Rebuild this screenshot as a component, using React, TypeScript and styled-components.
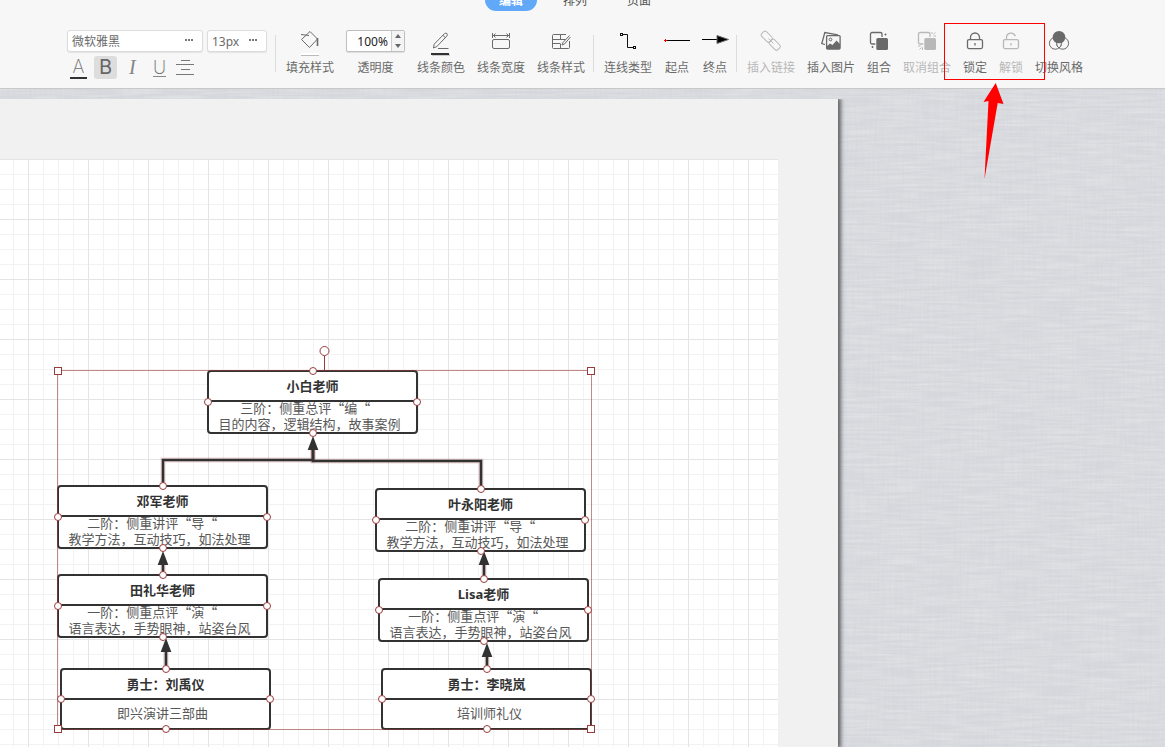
import React from "react";
import styled, { createGlobalStyle, css } from "styled-components";

const ui = '"Noto Sans", "Noto Sans CJK SC", sans-serif';
const cjk = '"Noto Sans CJK SC", "Noto Sans", sans-serif';
const ink = "#323232";
const mark = "#9a3b3b";

const GlobalStyle = createGlobalStyle`
  * { box-sizing: border-box; }
  html, body, #root { height: 100%; }
  body { margin: 0; overflow: hidden; font-family: ${ui}; font-size: 12px; color: #6a6a6a; }
  button, input, select { font: inherit; color: inherit; margin: 0; padding: 0; border: 0; background: none; }
`;

const Shell = styled.div`
  position: relative;
  display: flex;
  flex-direction: column;
  height: 100vh;
  overflow: hidden;
`;

const Header = styled.header`
  flex: none;
  background: #f7f7f7;
  border-bottom: 1px solid #c8c8c8;
  padding-right: 15px;
`;

const Tabs = styled.nav`
  display: flex;
  justify-content: center;
  align-items: flex-end;
  gap: 12px;
  height: 11px;
  overflow: hidden;
`;

const Tab = styled.button<{ $active?: boolean }>`
  flex: none;
  height: 22px;
  padding: 0 14px;
  line-height: 24px;
  border-radius: 11px;
  color: #555;
  ${(p) => p.$active && css`background: #62a8f8; color: #fff; font-weight: 700;`}
`;

const Toolbar = styled.div`
  display: flex;
  justify-content: center;
  padding: 19px 0 9px;
`;

const Group = styled.div`
  display: flex;
  flex: none;
  align-items: flex-start;
  gap: 12px;
`;

const Separator = styled.i`
  flex: none;
  width: 1px;
  height: 37px;
  margin: 5px 10px 0 8px;
  background: #dcdcdc;
`;

const FontPanel = styled.div`
  display: flex;
  flex-direction: column;
  gap: 4px;
`;

const FontRow = styled.div`
  display: flex;
  gap: 4px;
`;

const SelectBox = styled.label<{ $width: number }>`
  display: flex;
  align-items: center;
  width: ${(p) => p.$width}px;
  height: 22px;
  padding: 0 8px 0 4px;
  background: #fff;
  border: 1px solid #dcdcdc;
  border-radius: 3px;
  box-shadow: 0 1px 1px rgba(0, 0, 0, 0.08);
  svg { flex: none; }
`;

const Select = styled.select`
  flex: 1;
  min-width: 0;
  height: 20px;
  appearance: none;
  outline: none;
`;

const FormatButton = styled.button<{ $active?: boolean }>`
  display: flex;
  align-items: center;
  justify-content: center;
  width: 23px;
  height: 23px;
  border-radius: 3px;
  background: ${(p) => (p.$active ? "#dddddd" : "transparent")};
`;

const Glyph = styled.span<{ $kind: "color" | "bold" | "italic" | "underline" }>`
  display: block;
  height: 21px;
  font: 200 18px/20px Inter, sans-serif;
  color: #707070;
  ${(p) => p.$kind === "color" && css`width: 17px; height: 22px; border-bottom: 2px solid ${ink};`}
  ${(p) => p.$kind === "bold" && css`font-size: 20px; font-weight: 400; color: #666;`}
  ${(p) => p.$kind === "italic" && css`font: italic 400 20px/20px "Liberation Serif", serif; color: #858585;`}
  ${(p) => p.$kind === "underline" && css`height: 19px; line-height: 19px; border-bottom: 1px solid #888;`}
`;

const ToolButton = styled.button`
  display: flex;
  flex: none;
  flex-direction: column;
  align-items: center;
  gap: 7px;
  line-height: 18px;
  white-space: nowrap;
  &:disabled { color: #b8b8b8; }
`;

const Opacity = styled.div`
  display: flex;
  flex-direction: column;
  align-items: center;
  gap: 7px;
  line-height: 18px;
`;

const Stepper = styled.div`
  display: flex;
  width: 59px;
  height: 22px;
  background: #fff;
  border: 1px solid #bfbfbf;
  border-radius: 2px;
  box-shadow: 0 1px 1px rgba(0, 0, 0, 0.1);
`;

const StepperInput = styled.input`
  flex: 1;
  min-width: 0;
  height: 20px;
  padding-right: 3px;
  text-align: right;
  color: #222;
  outline: none;
`;

const StepperButtons = styled.div`
  display: flex;
  flex-direction: column;
  width: 13px;
  background: #f4f4f4;
  border-left: 1px solid #ccc;
`;

const StepButton = styled.button`
  display: flex;
  flex: 1;
  align-items: center;
  justify-content: center;
`;

const IconSvg = styled.svg`
  display: block;
  width: 26px;
  height: 22px;
  overflow: visible;
`;

const Workspace = styled.main`
  position: relative;
  flex: 1;
  min-height: 0;
  padding: 10px 327px 0 0;
  background: #d6d8dd;
  overflow: hidden;
`;

const Linen = styled.svg`
  position: absolute;
  inset: 0;
  width: 100%;
  height: 100%;
`;

const Paper = styled.div`
  position: relative;
  height: 100%;
  padding: 60px 60px 0 0;
  background: #f1f1f1;
  box-shadow: 2px 0 4px 1px rgba(0, 0, 0, 0.55);
  clip-path: inset(0 -12px 0 0);
`;

const Sheet = styled.div`
  position: relative;
  height: 100%;
  background-color: #fff;
  background-image:
    linear-gradient(to right, #e4e4e4 1px, transparent 1px),
    linear-gradient(to bottom, #e4e4e4 1px, transparent 1px),
    linear-gradient(to right, #f2f2f2 1px, transparent 1px),
    linear-gradient(to bottom, #f2f2f2 1px, transparent 1px);
  background-size: 60px 60px, 60px 60px, 15px 15px, 15px 15px;
  background-position: 28px 0, 0 0, 13px 0, 0 0;
`;

const Overlay = styled.svg`
  position: absolute;
  inset: 0;
  width: 100%;
  height: 100%;
  overflow: visible;
  pointer-events: none;
`;

const Node = styled.article<{ $x: number; $y: number; $h: number }>`
  position: absolute;
  left: ${(p) => p.$x}px;
  top: ${(p) => p.$y}px;
  display: flex;
  flex-direction: column;
  width: 211px;
  height: ${(p) => p.$h}px;
  background: #fff;
  border: 2px solid ${ink};
  border-radius: 4px;
  font-size: 13px;
  line-height: 16px;
`;

const NodeTitle = styled.h3`
  flex: none;
  height: 30px;
  margin: 0;
  border-bottom: 2px solid ${ink};
  font-size: 13px;
  line-height: 28px;
  text-align: center;
  color: ${ink};
`;

const NodeBody = styled.div`
  display: flex;
  flex: 1;
  min-height: 0;
  flex-direction: column;
  justify-content: center;
  padding-bottom: 2px;
  font-family: ${cjk};
  text-align: center;
  white-space: pre;
  color: #585858;
`;

const RedFrame = styled.div`
  position: absolute;
  left: 944px;
  top: 23px;
  width: 101px;
  height: 57px;
  border: 1px solid #f00;
  pointer-events: none;
`;

const RedArrow = styled.svg`
  position: absolute;
  left: 980px;
  top: 82px;
  width: 26px;
  height: 98px;
  pointer-events: none;
`;

function Icon({ children }: { children: React.ReactNode }) {
  return (
    <IconSvg viewBox="0 0 26 22" fill="none" stroke="currentColor" strokeWidth="1" aria-hidden="true">
      {children}
    </IconSvg>
  );
}

function Dots() {
  return (
    <svg width="9" height="4" fill="#777" aria-hidden="true">
      <rect x="0" width="2" height="2" />
      <rect x="3" width="2" height="2" />
      <rect x="6" width="2" height="2" />
    </svg>
  );
}

const icons = {
  fill: (
    <>
      <path d="M13 1.5 20.5 9 12.5 17.5 4.5 9.5Z M4 4.5 12 5.5" />
      <path d="M20.5 8v8" strokeWidth="1.6" />
      <rect x="4" y="24" width="18" height="2" fill="#bbb" stroke="none" />
      <rect x="4" y="23" width="18" height="2" fill="#fff" stroke="none" />
    </>
  ),
  lineColor: (
    <>
      <path d="M5.5 18 6.2 14.2 16.5 3.6Q17.8 2.6 19 3.6 19.8 4.8 18.8 6.1L8.8 16.6Z M15 5.4l2.3 2.2" />
      <path d="M10 18.5h10.5" />
      <rect x="4" y="24" width="18" height="2" fill="#ccc" stroke="none" />
      <rect x="3" y="23" width="18" height="2" fill={ink} stroke="none" />
    </>
  ),
  lineWidth: (
    <>
      <path d="M4.5 3v5M21.5 3v5M5 5.5h16M7.5 3.5l-2 2 2 2M18.5 3.500l2 2-2 2" />
      <rect x="4.5" y="9.5" width="17" height="9" rx="1.5" />
    </>
  ),
  lineStyle: (
    <>
      <path d="M18 4.5H5.5a1 1 0 0 0-1 1v12a1 1 0 0 0 1 1h15a1 1 0 0 0 1-1V11M4.5 9.5h13M4.5 13.5h8M12.5 4.5v5" />
      <path d="M21.5 5.5 15 12.5l-1 2.500 2.500-1 6-7" />
      <path d="M12.500 14v4" />
    </>
  ),
  connector: (
    <g stroke="#111">
      <rect x="5.5" y="3.5" width="2" height="2" />
      <rect x="18.5" y="16.5" width="2" height="2" />
      <path d="M8 4.5h4.5v13H18" />
    </g>
  ),
  start: (
    <>
      <path d="M2 10.500h24" stroke="#000" />
      <path d="M0 10.500h3M1.500 9v3" stroke="#f00" />
    </>
  ),
  end: (
    <>
      <path d="M0 9.500h16" stroke="#000" />
      <path d="M15 5.500 26.500 9.500 15 13.500Z" fill="#000" />
    </>
  ),
  link: (
    <>
      <rect x="3" y="3.4" width="11.5" height="6.6" rx="2" transform="rotate(45 8.75 6.7)" />
      <rect x="11" y="11.4" width="11.5" height="6.6" rx="2" transform="rotate(45 16.75 14.7)" />
      <path d="M10.5 8.500l5 5" />
    </>
  ),
  image: (
    <>
      <path d="M7 14.5 3.8 13.5 6.8 2.6 20 4.800" strokeWidth="1.3" />
      <rect x="8.6" y="5.6" width="13.5" height="13.5" rx="1" strokeWidth="1.3" />
      <circle cx="12.5" cy="9.5" r="1.4" />
      <path d="M8.500 19v-2.500l3.500-3 2.500 1.500 4-4.500 3.500 3.500v5Z" fill="currentColor" stroke="none" />
    </>
  ),
  group: (
    <>
      <rect x="4.5" y="2.5" width="11.5" height="11.5" rx="1.5" strokeWidth="1.3" />
      <rect x="9.300" y="7" width="13.200" height="13.500" rx="2" fill="#f7f7f7" stroke="none" />
      <rect x="10.300" y="8" width="11.700" height="12" rx="1.500" fill="currentColor" stroke="none" />
      <path d="M18.500 4.500h2M19.500 3.500v2M5.500 17h2M6.500 16v2" />
    </>
  ),
  ungroup: (
    <>
      <rect x="4.5" y="2.5" width="11.5" height="11.5" rx="1.5" strokeWidth="1.3" />
      <rect x="9.300" y="7" width="13.200" height="13.500" rx="2" fill="#f7f7f7" stroke="none" />
      <rect x="10.300" y="8" width="11.700" height="12" rx="1.500" fill="currentColor" stroke="none" />
      <path d="M18 2v2M19.500 4.500 21.500 2.500M19.500 6h2.500M8.500 17.500v2.500M7.500 17.500l-2 2M4 16h2.500" />
    </>
  ),
  lock: (
    <>
      <rect x="5.5" y="9.6" width="15" height="9" rx="1.5" strokeWidth="1.3" />
      <path d="M8.5 9.5V7.5a4.5 4.5 0 0 1 9 0v2" strokeWidth="1.3" />
      <path d="M13 13v2.5" strokeWidth="1.3" />
    </>
  ),
  unlock: (
    <>
      <rect x="5.5" y="9.6" width="15" height="9" rx="1.5" strokeWidth="1.3" />
      <path d="M8.5 9.5V7.5a4.5 4.5 0 0 1 8.8-1.2" strokeWidth="1.3" />
      <path d="M13 13v2.5" strokeWidth="1.3" />
    </>
  ),
  theme: (
    <>
      <circle cx="9.3" cy="13.3" r="5.9" />
      <circle cx="16.7" cy="13.3" r="5.9" />
      <circle cx="13" cy="7.3" r="6.3" fill="currentColor" stroke="none" />
      <path d="M10.5 13.5h5L13 18Z" fill="#f7f7f7" stroke="none" />
      <path d="M10.5 13.5q.3 3 2.5 4.5 2.200-1.500 2.500-4.500" />
    </>
  ),
};

function Tool({ icon, label, disabled }: { icon: keyof typeof icons; label: string; disabled?: boolean }) {
  return (
    <ToolButton type="button" disabled={disabled}>
      <Icon>{icons[icon]}</Icon>
      <span>{label}</span>
    </ToolButton>
  );
}

/* Short labels are narrower than their icon, so the icon may overhang. */
const Narrow = styled.div`
  display: flex;
  flex: none;
  justify-content: center;
  width: 24px;
`;

type NodeData = { x: number; y: number; h: number; title: string; lines: string[] };

const nodes: NodeData[] = [
  { x: 207, y: 211, h: 64, title: "小白老师", lines: ["三阶：侧重总评“编“     ", "目的内容，逻辑结构，故事案例  "] },
  { x: 57, y: 326, h: 64, title: "邓军老师", lines: ["二阶：侧重讲评“导“       ", "教学方法，互动技巧，如法处理  "] },
  { x: 375, y: 329, h: 64, title: "叶永阳老师", lines: ["二阶：侧重讲评“导“       ", "教学方法，互动技巧，如法处理  "] },
  { x: 57, y: 415, h: 64, title: "田礼华老师", lines: ["一阶：侧重点评“演“       ", "语言表达，手势眼神，站姿台风  "] },
  { x: 378, y: 419, h: 64, title: "Lisa老师", lines: ["一阶：侧重点评“演“       ", "语言表达，手势眼神，站姿台风  "] },
  { x: 60, y: 509, h: 62, title: "勇士：刘禹仪", lines: ["即兴演讲三部曲  "] },
  { x: 381, y: 509, h: 62, title: "勇士：李晓岚", lines: ["  培训师礼仪"] },
];

const links = [
  "M163 327V301H313V288",
  "M481 330V302H313V288",
  "M163 416V404",
  "M166 510V491",
  "M484 420V404",
  "M487 510V497",
];

const heads = [
  [313, 277],
  [163, 392],
  [166, 479],
  [484, 392],
  [487, 484],
];

const corners = [
  [58, 212],
  [591, 212],
  [58, 570],
  [591, 570],
];

export default function App() {
  return (
    <Shell>
      <GlobalStyle />
      <Header>
        <Tabs>
          <Tab type="button" $active>编辑</Tab>
          <Tab type="button">排列</Tab>
          <Tab type="button">页面</Tab>
        </Tabs>
        <Toolbar>
          <FontPanel>
            <FontRow>
              <SelectBox $width={136}>
                <Select aria-label="字体" defaultValue="微软雅黑">
                  <option>微软雅黑</option>
                </Select>
                <Dots />
              </SelectBox>
              <SelectBox $width={60}>
                <Select aria-label="字号" defaultValue="13px">
                  <option>13px</option>
                </Select>
                <Dots />
              </SelectBox>
            </FontRow>
            <FontRow>
              <FormatButton type="button"><Glyph $kind="color">A</Glyph></FormatButton>
              <FormatButton type="button" $active><Glyph $kind="bold">B</Glyph></FormatButton>
              <FormatButton type="button"><Glyph $kind="italic">I</Glyph></FormatButton>
              <FormatButton type="button"><Glyph $kind="underline">U</Glyph></FormatButton>
              <FormatButton type="button" aria-label="对齐">
                <svg width="20" height="17" stroke="#777" aria-hidden="true">
                  <path d="M5 1.500h9M0 5.500h18M5 10.500h9M0 15.500h18" />
                </svg>
              </FormatButton>
            </FontRow>
          </FontPanel>
          <Separator />
          <Group>
            <Tool icon="fill" label="填充样式" />
            <Opacity>
              <Stepper>
                <StepperInput id="opacity" type="text" defaultValue="100%" />
                <StepperButtons>
                  <StepButton type="button" aria-label="增加">
                    <svg width="6" height="4" fill="#666"><path d="M0 4 3 0 6 4Z" /></svg>
                  </StepButton>
                  <StepButton type="button" aria-label="减少">
                    <svg width="6" height="4" fill="#666"><path d="M0 0 3 4 6 0Z" /></svg>
                  </StepButton>
                </StepperButtons>
              </Stepper>
              <label htmlFor="opacity">透明度</label>
            </Opacity>
            <Tool icon="lineColor" label="线条颜色" />
            <Tool icon="lineWidth" label="线条宽度" />
            <Tool icon="lineStyle" label="线条样式" />
          </Group>
          <Separator />
          <Group>
            <Tool icon="connector" label="连线类型" />
            <Tool icon="start" label="起点" />
            <Tool icon="end" label="终点" />
          </Group>
          <Separator />
          <Group>
            <Tool icon="link" label="插入链接" disabled />
            <Tool icon="image" label="插入图片" />
            <Narrow><Tool icon="group" label="组合" /></Narrow>
            <Tool icon="ungroup" label="取消组合" disabled />
            <Narrow><Tool icon="lock" label="锁定" /></Narrow>
            <Narrow><Tool icon="unlock" label="解锁" disabled /></Narrow>
            <Tool icon="theme" label="切换风格" />
          </Group>
        </Toolbar>
      </Header>

      <Workspace>
        <Linen aria-hidden="true">
          <defs>
            <filter id="weft" x="0" y="0" width="100%" height="100%">
              <feTurbulence type="fractalNoise" baseFrequency="0.025 0.4" numOctaves="2" seed="4" />
              <feColorMatrix values="0 0 0 0 1  0 0 0 0 1  0 0 0 0 1  0.5 0 0 0 -0.16" />
            </filter>
            <filter id="warp" x="0" y="0" width="100%" height="100%">
              <feTurbulence type="fractalNoise" baseFrequency="0.4 0.025" numOctaves="2" seed="9" />
              <feColorMatrix values="0 0 0 0 0.6  0 0 0 0 0.62  0 0 0 0 0.66  0.5 0 0 0 -0.18" />
            </filter>
          </defs>
          <rect width="100%" height="100%" filter="url(#weft)" />
          <rect width="100%" height="100%" filter="url(#warp)" />
        </Linen>
        <Paper>
          <Sheet>
            {nodes.map((n) => (
              <Node key={n.title} $x={n.x} $y={n.y} $h={n.h}>
                <NodeTitle>{n.title}</NodeTitle>
                <NodeBody>
                  {n.lines.map((line) => (
                    <div key={line}>{line}</div>
                  ))}
                </NodeBody>
              </Node>
            ))}
            <Overlay aria-hidden="true">
              <g fill="none" stroke="#a03030" strokeOpacity="0.2" strokeWidth="5">
                {links.map((d) => <path key={d} d={d} />)}
              </g>
              <g fill="none" stroke={ink} strokeWidth="2.6">
                {links.map((d) => <path key={d} d={d} />)}
              </g>
              {heads.map(([x, y]) => (
                <path key={`${x}-${y}`} d={`M${x} ${y}l5.300 14h-10.600Z`} fill={ink} />
              ))}
              <rect x="57.5" y="211.5" width="534" height="359" fill="none" stroke={mark} strokeOpacity="0.6" />
              <g fill="#fff" stroke={mark}>
                {nodes.map((n) => (
                  <g key={n.title}>
                    <circle cx={n.x + 106} cy={n.y + 1} r="3.5" />
                    <circle cx={n.x + 1} cy={n.y + Math.round(n.h / 2)} r="3.5" />
                    <circle cx={n.x + 210} cy={n.y + Math.round(n.h / 2)} r="3.5" />
                    <circle cx={n.x + 106} cy={n.y + n.h - 1} r="3.5" />
                  </g>
                ))}
                <path d="M324.5 197v14" />
                <circle cx="324.5" cy="192" r="4.5" />
                {corners.map(([x, y]) => (
                  <rect key={`${x}-${y}`} x={x - 3.5} y={y - 3.5} width="7" height="7" />
                ))}
              </g>
            </Overlay>
          </Sheet>
        </Paper>
      </Workspace>

      <RedFrame />
      <RedArrow viewBox="0 0 26 98" aria-hidden="true">
        <path d="M15.7 1 23.5 22 17.7 21 4.5 97 8.5 19 3.5 20Z" fill="#f00" />
      </RedArrow>
    </Shell>
  );
}
